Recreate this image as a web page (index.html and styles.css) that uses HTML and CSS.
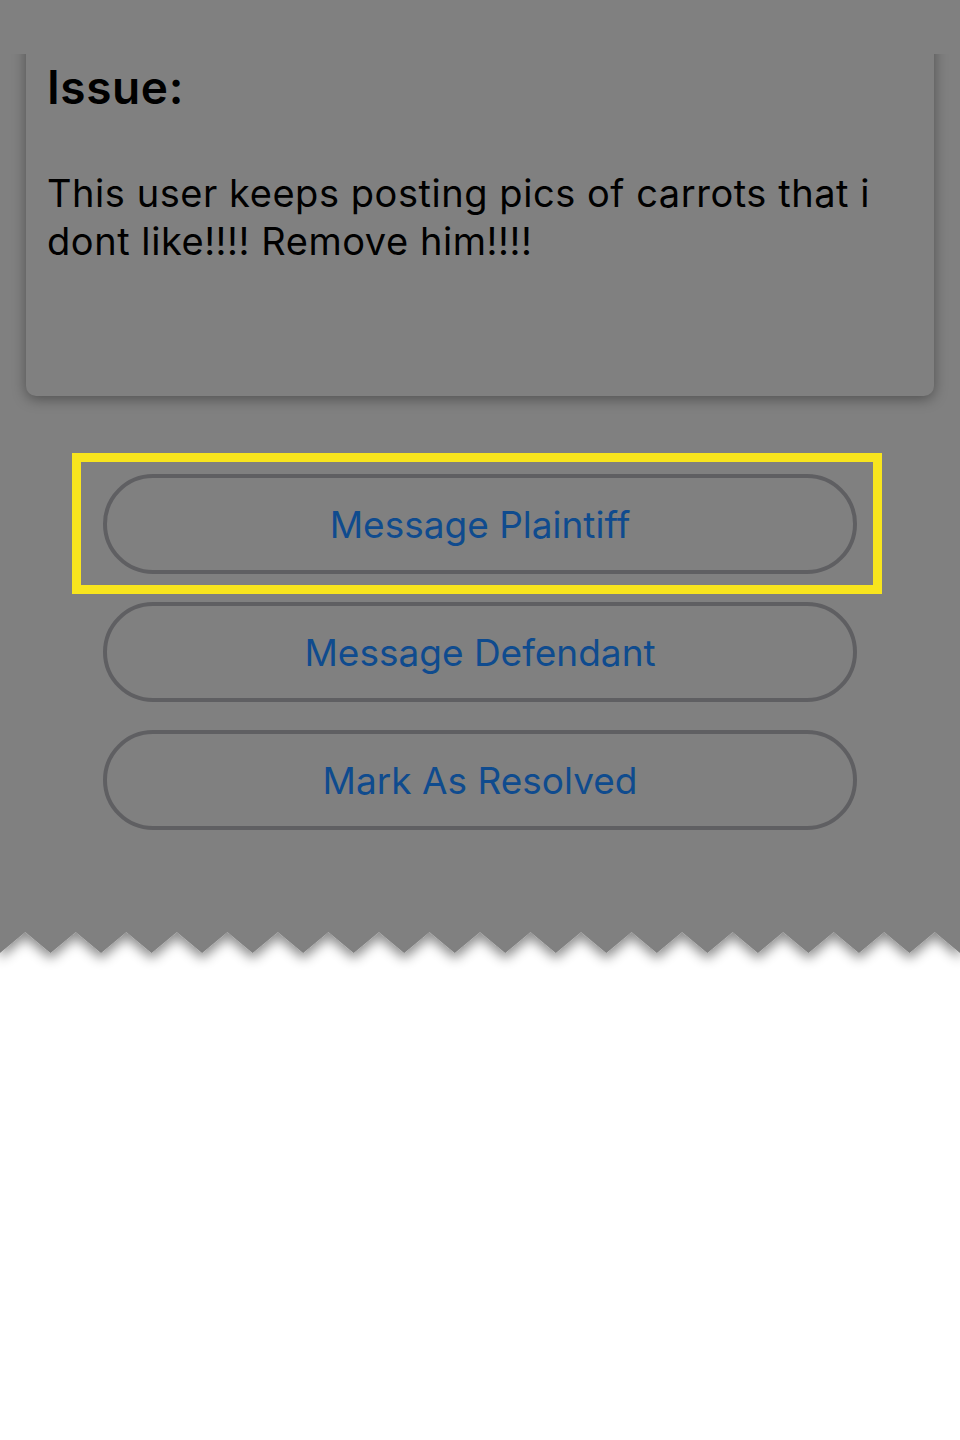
FILE: index.html
```html
<!DOCTYPE html>
<html lang="en">
<head>
<meta charset="utf-8">
<title>Issue</title>
<link rel="stylesheet" href="styles.css">
</head>
<body>
<div class="screen">
  <div class="card-clip">
    <section class="card">
      <h2 class="issue-title">Issue:</h2>
      <p class="issue-text">This user keeps posting pics of carrots that i dont like!!!! Remove him!!!!</p>
    </section>
  </div>
  <div class="actions">
    <div class="action">
      <button class="pill">Message Plaintiff</button>
      <span class="highlight"></span>
    </div>
    <div class="action">
      <button class="pill">Message Defendant</button>
    </div>
    <div class="action">
      <button class="pill">Mark As Resolved</button>
    </div>
  </div>
</div>
<svg class="tear" width="960" height="90" viewBox="0 0 960 90" xmlns="http://www.w3.org/2000/svg">
  <defs>
    <filter id="tearShadow" filterUnits="userSpaceOnUse" x="-20" y="0" width="1000" height="90">
      <feDropShadow dx="0" dy="6" stdDeviation="6" flood-color="#000" flood-opacity="0.45"/>
    </filter>
  </defs>
  <polygon filter="url(#tearShadow)" fill="#808080" points="0,0 960,0 960,61 934.74,40 909.47,61 884.21,40 858.95,61 833.68,40 808.42,61 783.16,40 757.89,61 732.63,40 707.37,61 682.11,40 656.84,61 631.58,40 606.32,61 581.05,40 555.79,61 530.53,40 505.26,61 480,40 454.74,61 429.47,40 404.21,61 378.95,40 353.68,61 328.42,40 303.16,61 277.89,40 252.63,61 227.37,40 202.11,61 176.84,40 151.58,61 126.32,40 101.05,61 75.79,40 50.53,61 25.26,40 0,61"/>
</svg>
</body>
</html>
```
FILE: styles.css
```css
* {
  box-sizing: border-box;
}

html, body {
  margin: 0;
  padding: 0;
  background: #ffffff;
}

body {
  width: 960px;
  height: 1440px;
  overflow: hidden;
  font-family: "Inter", "Roboto", "Liberation Sans", sans-serif;
}

.screen {
  background: #808080;
  height: 932px;
  padding-top: 54px;
}

.card-clip {
  overflow: hidden;
  padding: 0 0 30px;
}

.card {
  margin: -20px 26px 0;
  height: 362px;
  padding: 25px 21px 0;
  background: #808080;
  border-radius: 0 0 10px 10px;
  box-shadow: 0 3px 14px rgba(0, 0, 0, 0.38);
}

.issue-title {
  margin: 0;
  font-size: 46px;
  line-height: 56px;
  font-weight: 600;
  letter-spacing: 0.6px;
  color: #000;
}

.issue-text {
  margin: 54px 0 0;
  font-size: 38px;
  line-height: 48px;
  font-weight: 400;
  letter-spacing: 0.55px;
  color: #000;
}

.actions {
  display: flex;
  flex-direction: column;
  gap: 28px;
  padding: 48px 103px 0;
}

.action {
  position: relative;
}

.pill {
  display: flex;
  align-items: center;
  justify-content: center;
  width: 100%;
  height: 100px;
  margin: 0;
  padding: 0;
  border: 4.5px solid #5f5f62;
  border-radius: 50px;
  background: transparent;
  font-family: inherit;
  font-size: 37px;
  font-weight: 400;
  color: #0f4b8e;
}

.highlight {
  position: absolute;
  left: -31px;
  right: -25px;
  top: -21px;
  bottom: -20px;
  border: 9px solid #f8e51e;
  pointer-events: none;
}

.tear {
  display: block;
  margin-top: -40px;
  overflow: visible;
}
```
